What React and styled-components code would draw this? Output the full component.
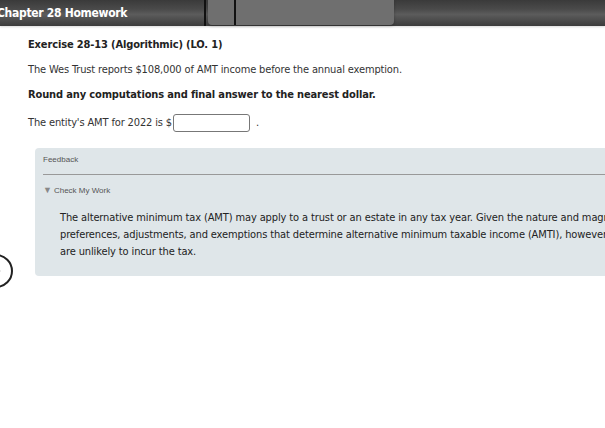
import React from 'react'
import styled, { createGlobalStyle } from 'styled-components'

const Global = createGlobalStyle`
    html, body {
        margin: 0;
        padding: 0;
        background: #fff;
        overflow: hidden;
    }
    body {
        font-family: "DejaVu Sans Condensed", "DejaVu Sans", sans-serif;
        font-stretch: condensed;
        color: #333;
    }
`

const Page = styled.div`
    position: relative;
    width: 605px;
    height: 428px;
    overflow: hidden;
`

const TopBar = styled.div`
    display: flex;
    align-items: stretch;
    height: 26px;
    background: linear-gradient(#3a3a3a 0%, #4a4a4a 35%, #5c5c5c 55%, #3c3c3c 100%);
    box-shadow: 0 1px 2px rgba(0,0,0,0.15);
`

const BarTitle = styled.div`
    width: 207px;
    margin-left: -3px;
    display: flex;
    align-items: center;
    color: #fff;
    font-weight: bold;
    font-size: 12px;
    letter-spacing: -0.3px;
`

const Divider = styled.div`
    width: 2px;
    background: #111;
`

const Tab = styled.div`
    width: 186px;
    margin-left: 2px;
    margin-bottom: 1px;
    background: #6f6f6f;
    border-radius: 0 0 4px 4px;
    box-shadow: 0 1px 3px rgba(0,0,0,0.25);
    display: flex;
`

const TabLine = styled.div`
    width: 2px;
    margin-left: 26px;
    background: #111;
`

const Content = styled.div`
    padding: 12px 0 0 28px;
    letter-spacing: -0.14px;
`

const Title = styled.div`
    font-weight: bold;
    font-size: 11px;
    color: #222;
    line-height: 14px;
`

const Text = styled.p`
    margin: ${p => p.$top || 11}px 0 0;
    font-size: 11px;
    line-height: 14px;
    font-weight: ${p => (p.$bold ? 'bold' : 'normal')};
    color: ${p => (p.$bold ? '#222' : '#333')};
    display: flex;
    align-items: center;
`

const AnswerInput = styled.input`
    width: 73px;
    height: 14px;
    margin: 0 6px 0 1px;
    border: 1px solid #777;
    border-radius: 3px;
    padding: 1px;
`

const FeedbackPanel = styled.div`
    margin: 16px 0 0 7px;
    width: 680px;
    height: 128px;
    background: #dfe6e9;
    border-radius: 4px;
    padding: 6px 8px 0;
    box-sizing: border-box;
    letter-spacing: normal;
`

const SmallLabel = styled.div`
    font-family: "Liberation Sans", Arial, sans-serif;
    font-stretch: normal;
    font-size: 8px;
    color: #555;
    line-height: 12px;
`

const Rule = styled.div`
    height: 1px;
    background: #999;
    margin: 8px 0 9px;
`

const Caret = styled.span`
    font-size: 9px;
    color: #888;
    margin-right: 2px;
`

const Explanation = styled.p`
    margin: 12px 0 0 17px;
    font-size: 11px;
    line-height: 17px;
    color: #222;
    white-space: nowrap;
    letter-spacing: -0.12px;
`

const NavCircle = styled.svg`
    position: absolute;
    left: -22px;
    top: 253px;
`

export default function App() {
    return (
        <Page>
            <Global />
            <TopBar>
                <BarTitle>Chapter 28 Homework</BarTitle>
                <Divider />
                <Tab>
                    <TabLine />
                </Tab>
            </TopBar>

            <Content>
                <Title>Exercise 28-13 (Algorithmic) (LO. 1)</Title>
                <Text>The Wes Trust reports $108,000 of AMT income before the annual exemption.</Text>
                <Text $bold>Round any computations and final answer to the nearest dollar.</Text>
                <Text $top={12}>
                    The entity's AMT for 2022 is $
                    <AnswerInput type="text" />
                    .
                </Text>

                <FeedbackPanel>
                    <SmallLabel>Feedback</SmallLabel>
                    <Rule />
                    <SmallLabel><Caret>▼</Caret>Check My Work</SmallLabel>
                    <Explanation>
                        The alternative minimum tax (AMT) may apply to a trust or an estate in any tax year. Given the nature and magnitude of the tax<br />
                        preferences, adjustments, and exemptions that determine alternative minimum taxable income (AMTI), however, most trusts and estates<br />
                        are unlikely to incur the tax.
                    </Explanation>
                </FeedbackPanel>
            </Content>

            <NavCircle width="36" height="36" viewBox="0 0 36 36">
                <circle cx="18" cy="18" r="16" fill="#fff" stroke="#222" strokeWidth="2" />
                <circle cx="21" cy="18" r="1.2" fill="#222" />
            </NavCircle>
        </Page>
    )
}
